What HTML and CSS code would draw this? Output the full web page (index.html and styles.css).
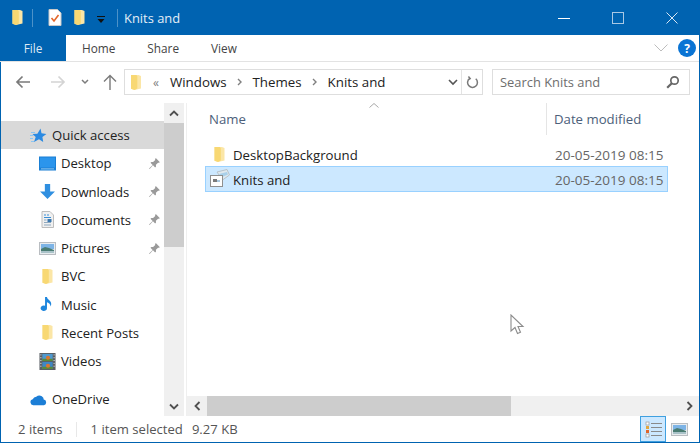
FILE: index.html
```html
<!DOCTYPE html>
<html lang="en">
<head>
<meta charset="utf-8">
<title>Knits and</title>
<link rel="stylesheet" href="styles.css">
</head>
<body>
<svg class="defs" width="0" height="0" aria-hidden="true">
  <defs>
    <symbol id="folder" viewBox="0 0 12 17">
      <path d="M1 1h7.500l2.500 1v12.500l-6.500 1.500L1 14.800z" fill="#fbe6a6"/>
      <path d="M1 1h5.500l.8 1.500v12l-2.800 1.500L1 14.800z" fill="#f8d873"/>
    </symbol>
    <symbol id="pin" viewBox="0 0 12 12">
      <path d="M7.200 1l3.800 3.800-1 .6-.7-.2-2 2 .1 1.600-.8.8-2-2L1.500 11 1 10.500l3.300-3.100-2-2 .8-.8 1.600.1 2-2-.2-.7z" fill="#9a9a9a"/>
    </symbol>
    <symbol id="landscape" viewBox="0 0 17 13">
      <rect x=".5" y=".5" width="16" height="12" fill="#e8ecef" stroke="#b9bdc1"/>
      <rect x="2" y="2" width="13" height="5" fill="#7db4e6"/>
      <path d="M2 7l4-2 4 1 5 2v3H2z" fill="#4a7c72"/>
      <rect x="2" y="9" width="13" height="2" fill="#a9c2c8"/>
    </symbol>
  </defs>
</svg>

<div class="window">
  <header class="titlebar">
    <svg class="qat-icon"><use href="#folder"/></svg>
    <span class="qat-sep"></span>
    <svg class="qat-doc" viewBox="0 0 14 17">
      <path d="M1 .5h8.500L13 4v12.500H1z" fill="#fff" stroke="#c9c9c9"/>
      <path d="M3.500 9l2.500 3 4.500-6" fill="none" stroke="#e3662b" stroke-width="1.600"/>
    </svg>
    <svg class="qat-icon qat-folder2"><use href="#folder"/></svg>
    <svg class="qat-drop" viewBox="0 0 8 7"><path d="M0 0h8v1H0zM.5 3h7L4 7z" fill="#111"/></svg>
    <span class="qat-sep qat-sep-2"></span>
    <span class="title">Knits and</span>
    <div class="controls">
      <svg class="ctl" viewBox="0 0 12 12"><path d="M0 6.500h12" stroke="#fff" fill="none"/></svg>
      <svg class="ctl" viewBox="0 0 12 12"><rect x=".5" y=".5" width="11" height="11" stroke="#a9c8e4" fill="none"/></svg>
      <svg class="ctl" viewBox="0 0 12 12"><path d="M.5.500l11 11m0-11l-11 11" stroke="#d8e6f3" fill="none"/></svg>
    </div>
  </header>

  <nav class="ribbon">
    <span class="tab-file">File</span>
    <span class="tab">Home</span>
    <span class="tab">Share</span>
    <span class="tab">View</span>
    <svg class="ribbon-chev" viewBox="0 0 14 8"><path d="M.5.500L7 7l6.500-6.500" fill="none" stroke="#bdbdbd"/></svg>
    <span class="help">?</span>
  </nav>

  <div class="addressrow">
    <svg class="nav-arrow" viewBox="0 0 16 14"><path d="M15 7H2M7.500 1.500L2 7l5.500 5.500" fill="none" stroke="#7a7a7a" stroke-width="1.700"/></svg>
    <svg class="nav-arrow nav-fwd" viewBox="0 0 16 14"><path d="M1 7h13M8.500 1.500L14 7l-5.500 5.500" fill="none" stroke="#d4d4d4" stroke-width="1.700"/></svg>
    <svg class="nav-down" viewBox="0 0 8 6"><path d="M1 1l3 3 3-3" fill="none" stroke="#7c7c7c" stroke-width="1.500"/></svg>
    <svg class="nav-up" viewBox="0 0 14 16"><path d="M7 16V2M1 7.500L7 1.500l6 6" fill="none" stroke="#7a7a7a" stroke-width="1.400"/></svg>
    <div class="address">
      <svg class="addr-folder"><use href="#folder"/></svg>
      <span class="addr-more">«</span>
      <span class="crumb">Windows</span>
      <svg class="crumb-sep" viewBox="0 0 5 8"><path d="M1 1l3 3-3 3" fill="none" stroke="#808080" stroke-width="1.400"/></svg>
      <span class="crumb">Themes</span>
      <svg class="crumb-sep" viewBox="0 0 5 8"><path d="M1 1l3 3-3 3" fill="none" stroke="#808080" stroke-width="1.400"/></svg>
      <span class="crumb">Knits and</span>
      <svg class="addr-drop" viewBox="0 0 10 7"><path d="M1 1l4 4 4-4" fill="none" stroke="#555" stroke-width="1.600"/></svg>
      <span class="addr-refresh">
        <svg viewBox="0 0 14 14"><path d="M4 2.600A5.300 5.300 0 1 0 10.500 3M2.600.500L4.500 2.800 2 4.500" fill="none" stroke="#7a7a7a" stroke-width="1.600"/></svg>
      </span>
    </div>
    <div class="search">
      <span>Search Knits and</span>
      <svg viewBox="0 0 14 14"><circle cx="8.500" cy="5.500" r="3.700" fill="none" stroke="#666" stroke-width="1.700"/><path d="M5.800 8.200L1.200 12.800" stroke="#666" stroke-width="2.200"/></svg>
    </div>
  </div>

  <main class="body">
    <aside class="navpane">
      <ul class="tree">
        <li class="tree-row top active">
          <svg class="ti" viewBox="0 0 17 16"><path d="M10.500 1l1 4.800 4.900.8-4 2.900.8 5-4.200-2.800-5 2.800 1.700-5-3.200-3 4.900-.2z" fill="#2b8ae2"/><path d="M1 5h4M0 8h3.500M0 11h3M1 14h3" stroke="#8cc6f2"/></svg>
          <span>Quick access</span>
        </li>
        <li class="tree-row">
          <svg class="ti" viewBox="0 0 17 14"><rect x=".5" y=".5" width="16" height="13" fill="#2b95ec" stroke="#1a7fd4"/><rect x="1" y="11" width="15" height="2" fill="#1a7fd4"/><rect x="2" y="12" width="13" height=".8" fill="#a9d8f7"/></svg>
          <span>Desktop</span><svg class="pin"><use href="#pin"/></svg>
        </li>
        <li class="tree-row">
          <svg class="ti" viewBox="0 0 16 16"><path d="M5.500 1h5v7H15l-7 7-7-7h4.500z" fill="#2f8fe0"/></svg>
          <span>Downloads</span><svg class="pin"><use href="#pin"/></svg>
        </li>
        <li class="tree-row">
          <svg class="ti" viewBox="0 0 16 17"><path d="M2.500.500h8L14 4v12.500H2.500z" fill="#f0f0f0" stroke="#bdbdbd"/><path d="M4.500 4h2M7.500 4h2M4.500 6.500h7" stroke="#3a8fd6"/><rect x="8" y="8" width="4" height="3" fill="#3a78b0"/><path d="M4.500 9h2.500M4.500 11.500h7M4.500 14h7" stroke="#8fa9bf"/></svg>
          <span>Documents</span><svg class="pin"><use href="#pin"/></svg>
        </li>
        <li class="tree-row">
          <svg class="ti"><use href="#landscape"/></svg>
          <span>Pictures</span><svg class="pin"><use href="#pin"/></svg>
        </li>
        <li class="tree-row">
          <svg class="ti"><use href="#folder"/></svg>
          <span>BVC</span>
        </li>
        <li class="tree-row">
          <svg class="ti" viewBox="0 0 16 16"><path d="M7.500 1v10.500a3 2.600 0 1 1-1.800-2.300V1h1.800c.5 3 4 3 4 6.500 0 1-.3 1.700-.7 2.300.2-2.500-2-3.500-3.300-4" fill="#1e86dd"/></svg>
          <span>Music</span>
        </li>
        <li class="tree-row">
          <svg class="ti"><use href="#folder"/></svg>
          <span>Recent Posts</span>
        </li>
        <li class="tree-row">
          <svg class="ti" viewBox="0 0 17 18"><rect width="17" height="18" fill="#5a5f64"/><rect x="3" y="1" width="11" height="7.500" fill="#4f9ad0"/><rect x="3" y="9.500" width="11" height="7.500" fill="#3f87c5"/><path d="M3 6h11v2.500H3zM3 14.500h11V17H3z" fill="#5b8a3a"/><circle cx="9" cy="5" r="2.200" fill="#d9762f"/><circle cx="9" cy="13.500" r="2.200" fill="#d9762f"/><path d="M1 2h1M1 5h1M1 8h1M1 11h1M1 14h1M15 2h1M15 5h1M15 8h1M15 11h1M15 14h1" stroke="#fff"/></svg>
          <span>Videos</span>
        </li>
        <li class="tree-row top onedrive">
          <svg class="ti" viewBox="0 0 18 13"><path d="M3.500 12.500a3.200 3.200 0 0 1-.6-6.300 4.300 4.300 0 0 1 3.700-2.500A5 5 0 0 1 12.500 3a3.800 3.800 0 0 1 2 3.600 3 3 0 0 1 .3 5.900z" fill="#1c7ed6"/></svg>
          <span>OneDrive</span>
        </li>
      </ul>
      <div class="vscroll">
        <svg class="sc-arrow" viewBox="0 0 10 7"><path d="M1 5.500l4-4 4 4" fill="none" stroke="#505050" stroke-width="1.800"/></svg>
        <div class="vthumb"></div>
        <svg class="sc-arrow sc-arrow-end" viewBox="0 0 10 7"><path d="M1 1.500l4 4 4-4" fill="none" stroke="#505050" stroke-width="1.800"/></svg>
      </div>
    </aside>

    <section class="files">
      <svg class="sort-caret" viewBox="0 0 10 5"><path d="M.5 4.500L5 .5l4.500 4" fill="none" stroke="#a8a8a8"/></svg>
      <div class="colhead">
        <span class="col-name">Name</span>
        <span class="col-date">Date modified</span>
      </div>
      <div class="list">
        <div class="file">
          <svg class="file-icon"><use href="#folder"/></svg>
          <span class="file-name">DesktopBackground</span>
          <span class="file-date">20-05-2019 08:15</span>
        </div>
        <div class="file selected">
          <svg class="file-icon file-theme" viewBox="0 0 20 18"><path d="M7 3l10-2.500 2.500 5.500-7 5z" fill="#dfe8ee" stroke="#b7c2ca"/><path d="M9 5l8-2 1 2.500-7 3z" fill="#a9d0ea"/><rect x=".5" y="6.500" width="12" height="11" fill="#fdfdfd" stroke="#8f8f8f"/><rect x="3" y="10" width="4" height="3" fill="#7a7a7a"/><rect x="7" y="11" width="3" height="2" fill="#a9c6dc"/></svg>
          <span class="file-name">Knits and</span>
          <span class="file-date">20-05-2019 08:15</span>
        </div>
      </div>
      <svg class="cursor" viewBox="0 0 15 21"><path d="M1 1v16l4-3.500 2.500 6 3-1.300-2.500-5.700h5z" fill="#fff" stroke="#8c8c8c" stroke-width="1.100"/></svg>
      <div class="hscroll">
        <svg class="sc-h" viewBox="0 0 7 10"><path d="M5.500 1l-4 4 4 4" fill="none" stroke="#505050" stroke-width="1.800"/></svg>
        <div class="hthumb"></div>
        <svg class="sc-h" viewBox="0 0 7 10"><path d="M1.500 1l4 4-4 4" fill="none" stroke="#505050" stroke-width="1.800"/></svg>
      </div>
    </section>
  </main>

  <footer class="status">
    <span class="st-count">2 items</span>
    <span class="st-sep"></span>
    <span class="st-sel">1 item selected</span>
    <span class="st-size">9.27 KB</span>
    <span class="view-btn on">
      <svg viewBox="0 0 17 17"><path d="M6 2.500h11M6 6.500h11M6 10.500h11M6 14.500h11" stroke="#8a8a8a"/><rect x="1" y="1" width="3" height="3" fill="#fff" stroke="#999" stroke-width=".7"/><rect x="1" y="5" width="3" height="3" fill="#e3a63c"/><rect x="1" y="9" width="3" height="3" fill="#e0662b"/><rect x="1" y="13" width="3" height="3" fill="#fff" stroke="#999" stroke-width=".7"/></svg>
    </span>
    <span class="view-btn">
      <svg><use href="#landscape"/></svg>
    </span>
  </footer>
</div>
</body>
</html>
```

FILE: styles.css
```css
* { box-sizing: border-box; }
html, body { margin: 0; padding: 0; height: 100%; }
body { background: #fff; overflow: hidden; font-family: "Open Sans", "Noto Sans", "Liberation Sans", sans-serif; color: #1f1f1f; }
.defs { position: absolute; }
svg { display: block; flex: none; }

.window { width: 700px; height: 443px; display: flex; flex-direction: column; border: 1px solid #0063b1; border-top: 0; background: #fff; }

.titlebar { height: 35px; margin: 0 -1px; background: #0063b1; display: flex; align-items: center; padding: 0 22px 0 11px; flex: none; }
.qat-icon { width: 13px; height: 17px; }
.qat-sep { width: 1px; height: 18px; background: #4d92c8; margin-left: 8px; }
.qat-doc { width: 14px; height: 17px; margin-left: 15px; }
.qat-folder2 { margin-left: 11px; }
.qat-drop { width: 8px; height: 7px; margin-left: 11px; margin-top: 3px; }
.qat-sep-2 { margin-left: 12px; }
.title { color: #e4eef7; font-size: 12.9px; margin-left: 6px; }
.controls { margin-left: auto; display: flex; gap: 42px; }
.ctl { width: 12px; height: 12px; }

.ribbon { height: 27px; flex: none; display: flex; align-items: center; border-bottom: 1px solid #e3e3e3; margin-left: -1px; font-size: 11.8px; padding-right: 3px; }
.tab-file { width: 66px; height: 27px; background: #0063b1; color: #dfeaf5; display: flex; align-items: center; justify-content: center; margin-bottom: 1px; }
.tab { color: #444; margin-left: 16px; margin-right: 16px; }
.ribbon-chev { width: 14px; height: 8px; margin-left: auto; }
.help { width: 18px; height: 18px; border-radius: 50%; background: #0a74d4; color: #fff; margin-left: 10px; font-size: 12px; font-weight: 700; display: flex; align-items: center; justify-content: center; }

.addressrow { height: 41px; flex: none; display: flex; align-items: flex-start; padding-top: 7px; font-size: 13.3px; }
.nav-arrow { width: 16px; height: 14px; margin: 6px 0 0 14px; }
.nav-fwd { margin-left: 19px; }
.nav-down { width: 8px; height: 6px; margin: 10px 0 0 15px; }
.nav-up { width: 14px; height: 16px; margin: 5px 0 0 14px; }
.address { width: 359px; height: 26px; margin-left: 7px; border: 1px solid #dedede; display: flex; align-items: center; padding-left: 5px; color: #222; }
.addr-folder { width: 12px; height: 17px; }
.addr-more { color: #808080; font-size: 12px; margin: 0 11px 0 11px; }
.crumb { margin-bottom: 1px; }
.crumb-sep { width: 5px; height: 8px; margin: 0 10.5px; }
.addr-drop { width: 10px; height: 7px; margin-left: auto; margin-right: 3px; }
.addr-refresh { width: 21px; height: 24px; border-left: 1px solid #e3e3e3; display: flex; align-items: center; justify-content: center; }
.addr-refresh svg { width: 13px; height: 13px; }
.search { width: 198px; height: 26px; margin-left: 9px; border: 1px solid #dedede; display: flex; align-items: center; justify-content: space-between; padding: 0 9px 0 7px; color: #6d6d6d; font-size: 12.9px; }
.search svg { width: 14px; height: 14px; }

.body { flex: 1; min-height: 0; display: flex; }
.navpane { width: 183px; flex: none; display: flex; position: relative; }
.tree { list-style: none; margin: 18px 0 0; padding: 0; flex: 1; font-size: 13.1px; }
.tree-row { height: 28.25px; display: flex; align-items: center; padding-left: 38px; position: relative; color: #222; }
.tree-row.top { padding-left: 29px; }
.tree-row.active { background: #d9d9d9; }
.tree-row.onedrive { margin-top: 10px; }
.ti { width: 17px; height: 17px; margin-right: 5px; }
.pin { width: 13px; height: 13px; margin-left: auto; margin-right: 3px; }
.vscroll { width: 20px; background: #f0f0f0; display: flex; flex-direction: column; align-items: center; }
.sc-arrow { width: 10px; height: 7px; margin: 7px 0 6px; }
.vthumb { width: 20px; height: 124px; background: #cdcdcd; }
.sc-arrow-end { margin: auto 0 6px; }

.files { flex: 1; min-width: 0; display: flex; flex-direction: column; position: relative; border-left: 1px solid #efefef; margin-left: 2px; }
.sort-caret { position: absolute; left: 182px; top: 0; width: 10px; height: 5px; }
.colhead { height: 32px; display: flex; align-items: center; font-size: 13.2px; color: #4c607a; flex: none; }
.col-name { width: 360px; padding-left: 22px; height: 100%; display: flex; align-items: center; border-right: 1px solid #e5e5e5; }
.col-date { padding-left: 7px; }
.list { flex: 1; padding: 7px 0 0 18px; font-size: 13.2px; }
.file { width: 463px; height: 25px; display: flex; align-items: center; padding-left: 5px; border: 1px solid transparent; color: #222; }
.file.selected { background: #cce8ff; border-color: #99d1ff; margin-top: -1px; height: 26px; padding-top: 2px; }
.file-icon { width: 17px; height: 17px; margin-right: 5px; }
.file-theme { width: 20px; height: 18px; margin: -4px 3px 0 -1px; }
.file-name { width: 322px; }
.file-date { color: #666; font-size: 13.5px; }
.cursor { position: absolute; left: 323px; top: 211px; width: 15px; height: 21px; }
.hscroll { height: 20px; background: #f0f0f0; display: flex; align-items: center; flex: none; }
.sc-h { width: 7px; height: 10px; margin: 0 6px 0 7px; }
.hthumb { width: 304px; height: 20px; background: #cdcdcd; margin-right: auto; }

.status { height: 26px; flex: none; display: flex; align-items: center; font-size: 13.1px; color: #555; padding-left: 17px; }
.st-sep { width: 1px; height: 15px; background: #e8e8e8; margin: 0 14px 0 13px; }
.st-size { margin-left: 9px; }
.view-btn { width: 23px; height: 26px; display: flex; align-items: center; justify-content: center; }
.view-btn svg { width: 17px; height: 13px; }
.view-btn.on { width: 26px; background: #cce8ff; border: 1px solid #3fa0e0; margin-left: auto; }
.view-btn.on svg { height: 17px; }
.view-btn:last-child { margin-right: 8px; margin-left: 2px; }
```
